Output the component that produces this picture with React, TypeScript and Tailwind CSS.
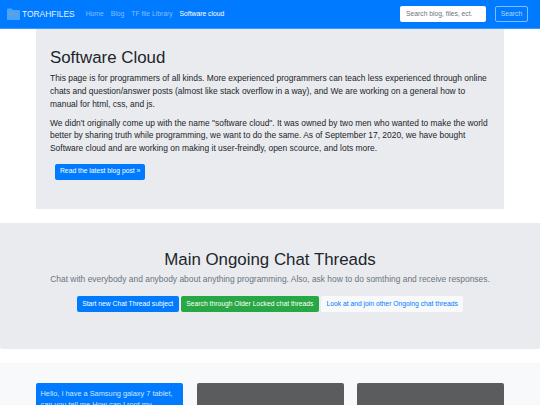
export default function App() {
  const font = { fontFamily: '"Liberation Sans", Arial, sans-serif' };
  return (
    <div style={font} className="w-[540px] h-[405px] overflow-hidden bg-white text-[#212529] text-[8.44px] leading-[12.66px]">
      <nav className="h-[29px] bg-[#007bff] flex items-center pl-[7px] pr-[12px] border-b border-[#3f97f5]">
        <svg width="13" height="12" viewBox="0 0 13 12" className="mb-[1px]">
          <path d="M0 1.5A1 1 0 0 1 1 .5h3.5l1.5 1.5H12a1 1 0 0 1 1 1V11a1 1 0 0 1-1 1H1a1 1 0 0 1-1-1z" fill="#4aa3fb" />
          <rect x="1.5" y="5.5" width="9" height="1.5" fill="#7a9cc4" />
        </svg>
        <span className="text-[#e6f2ff] text-[8.44px] ml-[2px] mr-[11px]">TORAHFILES</span>
        <div className="flex gap-[7px] text-[6.75px]">
          <span className="text-[#80bdff]">Home</span>
          <span className="text-[#80bdff]">Blog</span>
          <span className="text-[#80bdff]">TF file Library</span>
          <span className="text-white">Software cloud</span>
        </div>
        <div className="ml-auto flex items-center gap-[9px]">
          <div className="w-[86px] h-[16px] bg-white rounded-[2px] flex items-center px-[6px] text-[6.75px] text-[#6c757d]">Search blog, files, ect.</div>
          <div className="w-[33px] h-[16px] border border-[#80bdff] rounded-[2px] flex items-center justify-center text-[6.75px] text-[#b3d7ff]">Search</div>
        </div>
      </nav>
      <main className="mx-[36px] h-[180px] bg-[#e9ebef] pt-[18px] px-[14px]">
        <h1 className="text-[16.88px] leading-[22px] mb-[3.4px]">Software Cloud</h1>
        <p className="mb-[6.3px]">This page is for programmers of all kinds. More experienced programmers can teach less experienced through online chats and question/answer posts (almost like stack overflow in a way), and We are working on a general how to manual for html, css, and js.</p>
        <p className="mb-[9.2px]">We didn't originally come up with the name "software cloud". It was owned by two men who wanted to make the world better by sharing truth while programming, we want to do the same. As of September 17, 2020, we have bought Software cloud and are working on making it user-freindly, open scource, and lots more.</p>
        <div className="ml-[5px] flex w-fit items-center h-[16px] px-[5px] bg-[#007bff] text-white text-[6.75px] rounded-[2px]">Read the latest blog post »</div>
      </main>
      <section className="mt-[14px] h-[126px] bg-[#e9ebef] rounded-b-[2px] flex flex-col items-center pt-[26px]">
        <h2 className="text-[16.88px] leading-[22px] mb-[2.4px]">Main Ongoing Chat Threads</h2>
        <p className="text-[#6c757d] mb-[10px]">Chat with everybody and anybody about anything programming. Also, ask how to do somthing and receive responses.</p>
        <div className="flex gap-[2px] text-[6.75px]">
          <div className="h-[16px] px-[5.5px] flex items-center bg-[#007bff] text-white rounded-[2px]">Start new Chat Thread subject</div>
          <div className="h-[16px] px-[5.5px] flex items-center bg-[#28a745] text-white rounded-[2px]">Search through Older Locked chat threads</div>
          <div className="h-[16px] px-[5.5px] flex items-center bg-[#f8f9fa] text-[#007bff] rounded-[2px]">Look at and join other Ongoing chat threads</div>
        </div>
      </section>
      <section className="mt-[14px] bg-[#f8f9fa] pt-[20px] h-[60px] px-[36px] flex gap-[13.5px] items-start text-[7.38px]">
        <div className="w-[147px] h-[60px] bg-[#007bff] text-[#cfe5ff] rounded-[2px] px-[4.5px] py-[4.5px] leading-[11px]">Hello, I have a Samsung galaxy 7 tablet, can you tell me How can I root my</div>
        <div className="w-[147px] h-[60px] bg-[#5a5c5e] rounded-[2px]" />
        <div className="w-[147px] h-[60px] bg-[#5a5c5e] rounded-[2px]" />
      </section>
    </div>
  );
}
